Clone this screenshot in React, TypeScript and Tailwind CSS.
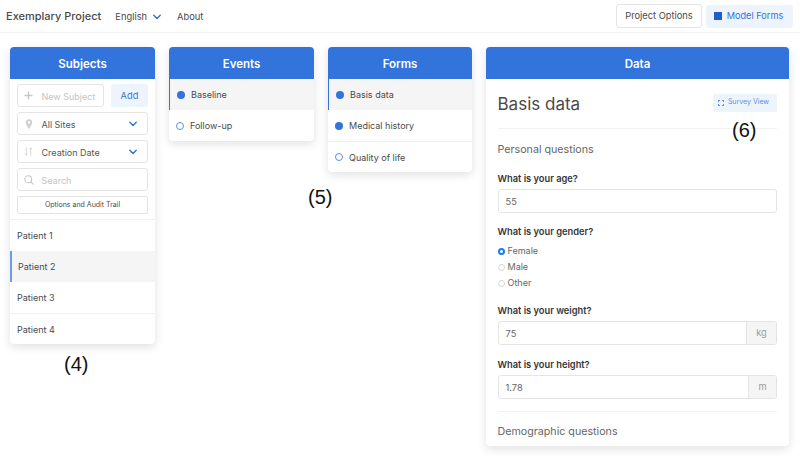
import React from "react";

const Chevron = ({ className = "" }: { className?: string }) => (
  <svg viewBox="0 0 10 7" className={`w-[8px] h-[6px] ${className}`} fill="none" stroke="#3273dc" strokeWidth="1.8" strokeLinecap="round" strokeLinejoin="round">
    <path d="M1 1.3 L5 5.3 L9 1.3" />
  </svg>
);

const Panel = ({ title, className, children }: { title: string; className: string; children: React.ReactNode }) => (
  <section className={`${className} bg-white rounded-[4px] shadow-[0_3px_10px_rgba(10,10,10,0.12)] self-start`}>
    <h2 className="h-8 pt-[3px] bg-[#3273dc] rounded-t-[4px] flex items-center justify-center text-white text-[11.5px] font-semibold">{title}</h2>
    {children}
  </section>
);

const Control = ({ icon, label, chevron, muted }: { icon: React.ReactNode; label: string; chevron?: boolean; muted?: boolean }) => (
  <div className="h-[23px] border border-[#e4e4e4] rounded-[3px] flex items-center bg-white">
    <span className="w-[23px] flex justify-center shrink-0 -ml-px">{icon}</span>
    <span className={`text-[9px] pl-[1.5px] pt-[2px] ${muted ? "text-[#c4c4c4]" : "text-[#555]"}`}>{label}</span>
    {chevron && <Chevron className="ml-auto mr-[10px]" />}
  </div>
);

const StepRow = ({ label, status, active, border }: { label: string; status: "done" | "open"; active?: boolean; border?: boolean }) => (
  <div className={`h-[31px] flex items-center text-[9px] text-[#4a4a4a] pl-[7px] ${active ? "bg-[#f5f5f5] border-l border-[#3273dc]" : ""} ${border ? "border-t border-[#f1f1f1]" : ""}`}>
    {status === "done" ? (
      <span className="w-2 h-2 rounded-full bg-[#3273dc] mr-[6px]" />
    ) : (
      <span className="w-2 h-2 rounded-full border border-[#5a8fe6] mr-[6px]" />
    )}
    <span className="pt-[1px]">{label}</span>
  </div>
);

const PatientRow = ({ label, active, border }: { label: string; active?: boolean; border?: boolean }) => (
  <div className={`h-[31px] flex items-center text-[9px] text-[#4a4a4a] ${active ? "bg-[#f5f5f5] border-l-2 border-[#6d9bec] pl-[6px]" : "pl-[7px]"} ${border ? "border-t border-[#f1f1f1]" : ""}`}>
    <span className="pt-[1px]">{label}</span>
  </div>
);

const Label = ({ children }: { children: React.ReactNode }) => (
  <label className="block text-[9.3px] font-semibold text-[#363636] leading-[12px]">{children}</label>
);

const Input = ({ value, unit, unitWidth }: { value: string; unit?: string; unitWidth?: string }) => (
  <div className="h-[24px] border border-[#e4e4e4] rounded-[3px] flex items-center text-[9.3px] text-[#666]">
    <span className="pl-[7px] flex-1 pt-[1px]">{value}</span>
    {unit && (
      <span className={`${unitWidth} h-full bg-[#f5f5f5] border-l border-[#e4e4e4] flex items-center justify-center text-[#9a9a9a] rounded-r-[3px]`}>{unit}</span>
    )}
  </div>
);

const Radio = ({ label, checked }: { label: string; checked?: boolean }) => (
  <div className="h-[16px] flex items-center text-[9px] text-[#666]">
    {checked ? (
      <span className="w-[7px] h-[7px] rounded-full border-[2px] border-[#1a7df0] bg-white mr-[3px] mt-[1px]" />
    ) : (
      <span className="w-[7px] h-[7px] rounded-full border border-[#d4d4d4] bg-white mr-[3px] mt-[1px]" />
    )}
    {label}
  </div>
);

export default function App() {
  return (
    <div className="relative w-[800px] h-[458px] bg-white overflow-hidden font-['Inter','Liberation_Sans',sans-serif]">
      <header className="h-[33px] border-b border-[#f3f3f3] flex items-center pl-[6px] pr-[7px]">
        <span className="text-[11px] font-medium text-[#4a4a4a]">Exemplary Project</span>
        <span className="ml-[14px] text-[9.3px] text-[#4a4a4a] pt-[1px]">English</span>
        <Chevron className="ml-[6px] mt-[1px]" />
        <span className="ml-[16px] text-[9.3px] text-[#4a4a4a] pt-[1px]">About</span>
        <button className="ml-auto w-[86px] h-[24px] border border-[#e4e4e4] rounded-[3px] bg-white text-[9.3px] text-[#4a4a4a]">Project Options</button>
        <button className="ml-[4px] w-[87px] h-[23px] pr-[2px] rounded-[3px] bg-[#eef4fc] text-[9.2px] text-[#3273dc] flex items-center justify-center">
          <span className="w-2 h-2 bg-[#1f5fc9] mr-[5px]" />
          Model Forms
        </button>
      </header>

      <main className="flex items-start pt-[14px] pl-[10px] gap-[14px]">
        <Panel title="Subjects" className="w-[145px]">
          <div className="px-[7px] pt-[5px] pb-[5px] flex flex-col gap-[5px] border-b border-[#f1f1f1]">
            <div className="flex gap-[7px]">
              <div className="flex-1">
                <Control
                  muted
                  label="New Subject"
                  icon={
                    <svg viewBox="0 0 10 10" className="w-[9px] h-[9px]" stroke="#c8c8c8" strokeWidth="1.6">
                      <path d="M5 0.5V9.5M0.5 5H9.5" />
                    </svg>
                  }
                />
              </div>
              <button className="w-[37px] h-[23px] rounded-[3px] bg-[#eef4fc] text-[9.3px] text-[#3273dc] pt-[1px]">Add</button>
            </div>
            <Control
              chevron
              label="All Sites"
              icon={
                <svg viewBox="0 0 10 12" className="w-[8px] h-[10px]" fill="#d0d0d0">
                  <path fillRule="evenodd" d="M5 0a4 4 0 0 0-4 4c0 3 4 8 4 8s4-5 4-8a4 4 0 0 0-4-4zm0 5.5a1.5 1.5 0 1 1 0-3 1.5 1.5 0 0 1 0 3z" />
                </svg>
              }
            />
            <Control
              chevron
              label="Creation Date"
              icon={
                <svg viewBox="0 0 10 10" className="w-[9px] h-[9px]" fill="none" stroke="#cfcfcf" strokeWidth="1">
                  <path d="M2.5 0.5V9M1 7.5L2.5 9L4 7.5M7.5 9.5V1M6 2.5L7.5 1L9 2.5" />
                </svg>
              }
            />
            <Control
              muted
              label="Search"
              icon={
                <svg viewBox="0 0 10 10" className="w-[10px] h-[10px]" fill="none" stroke="#c8c8c8" strokeWidth="1.1">
                  <circle cx="4.2" cy="4.2" r="3.4" />
                  <path d="M6.8 6.8L9.5 9.5" />
                </svg>
              }
            />
            <button className="h-[18px] border border-[#e4e4e4] rounded-[2px] bg-white text-[7px] text-[#4a4a4a]">Options and Audit Trail</button>
          </div>
          <PatientRow label="Patient 1" />
          <PatientRow label="Patient 2" active />
          <PatientRow label="Patient 3" />
          <PatientRow label="Patient 4" border />
        </Panel>

        <Panel title="Events" className="w-[145px]">
          <StepRow label="Baseline" status="done" active />
          <StepRow label="Follow-up" status="open" />
        </Panel>

        <Panel title="Forms" className="w-[144px]">
          <StepRow label="Basis data" status="done" active />
          <StepRow label="Medical history" status="done" />
          <StepRow label="Quality of life" status="open" border />
        </Panel>

        <Panel title="Data" className="w-[303px]">
          <div className="pl-[11.5px] pr-[12px] pt-[15px] h-[367px]">
            <div className="flex items-center justify-between border-b border-[#f1f1f1] h-[35px] pb-[17px]">
              <h1 className="text-[17px] leading-[22px] text-[#4a4a4a] pt-[2px]">Basis data</h1>
              <button className="w-[64px] h-[18px] pr-[3px] bg-[#eef4fc] rounded-[2px] text-[7px] text-[#5a8fe6] flex items-center justify-center">
                <svg viewBox="0 0 10 10" className="w-[6px] h-[6px] mr-[4px]" fill="none" stroke="#3273dc" strokeWidth="1.6">
                  <path d="M0.8 3V0.8H3M7 0.8H9.2V3M9.2 7V9.2H7M3 9.2H0.8V7" />
                </svg>
                Survey View
              </button>
            </div>
            <h3 className="text-[10.7px] leading-[14px] text-[#666] mt-[14px]">Personal questions</h3>
            <div className="mt-[16px]">
              <Label>What is your age?</Label>
              <div className="mt-[4px]"><Input value="55" /></div>
            </div>
            <div className="mt-[13px]">
              <Label>What is your gender?</Label>
              <div className="mt-[5px]">
                <Radio label="Female" checked />
                <Radio label="Male" />
                <Radio label="Other" />
              </div>
            </div>
            <div className="mt-[14px]">
              <Label>What is your weight?</Label>
              <div className="mt-[4px]"><Input value="75" unit="kg" unitWidth="w-[30px]" /></div>
            </div>
            <div className="mt-[14px]">
              <Label>What is your height?</Label>
              <div className="mt-[4px]"><Input value="1.78" unit="m" unitWidth="w-[28px]" /></div>
            </div>
            <div className="border-t border-[#f1f1f1] mt-[12px] pt-[13px]">
              <h3 className="text-[10.7px] leading-[14px] text-[#666]">Demographic questions</h3>
            </div>
          </div>
        </Panel>
      </main>

      <span className="absolute left-[64px] top-[352px] text-[20px] leading-[24px] text-[#111] font-['Liberation_Sans',sans-serif]">(4)</span>
      <span className="absolute left-[308px] top-[185px] text-[20px] leading-[24px] text-[#111] font-['Liberation_Sans',sans-serif]">(5)</span>
      <span className="absolute left-[732px] top-[118px] text-[20px] leading-[24px] text-[#111] font-['Liberation_Sans',sans-serif]">(6)</span>
    </div>
  );
}
